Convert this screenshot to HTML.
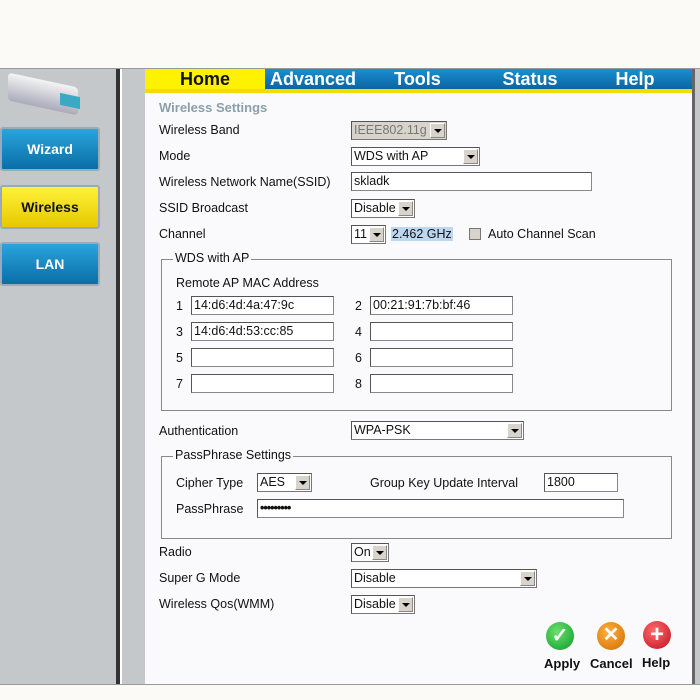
<!DOCTYPE html>
<html><head><style>
*{margin:0;padding:0;box-sizing:border-box}
body{width:700px;height:700px;background:#fbfaf6;position:relative;overflow:hidden;font-family:"Liberation Sans",Arial,sans-serif;font-size:12.5px;color:#111}
.a{position:absolute}
.sel{position:absolute;background:#fff;border:1px solid #777;border-top-color:#555;border-left-color:#555;height:19px;font-size:12.5px;padding:1px 2px;line-height:15px}
.sel .ar{position:absolute;right:1px;top:1px;width:15px;height:15px;background:#d8d4cc;border:1px solid #888;border-top-color:#fff;border-left-color:#fff}
.sel .ar:after{content:"";position:absolute;left:3px;top:5px;border-left:4px solid transparent;border-right:4px solid transparent;border-top:4px solid #000}
.inp{position:absolute;background:#fff;border:1px solid #888;border-top-color:#555;border-left-color:#555;height:19px;font-size:12.5px;padding:1px 2px;line-height:15px}
.tab{position:absolute;top:69px;height:21px;color:#fff;font-weight:bold;font-size:18px;line-height:20px;text-align:center}
.btn{position:absolute;left:0;width:100px;height:44px;border-radius:3px;font-weight:bold;font-size:14px;text-align:center;line-height:40px}
.fs{position:absolute;border:1px solid #888}
.lg{position:absolute;background:#fafafc;padding:0 2px;top:-9px}
</style></head><body>
<div class="a" style="left:0;top:68px;width:700px;height:617px;background:#c4c8ca;border-top:1px solid #999;border-bottom:1px solid #999"></div>
<div class="a" style="left:116px;top:69px;width:4px;height:615px;background:#333"></div>
<div class="a" style="left:120px;top:69px;width:2px;height:615px;background:#fff"></div>
<div class="a" style="left:145px;top:69px;width:547px;height:615px;background:#fafafc"></div>
<div class="a" style="left:692px;top:69px;width:3px;height:615px;background:#666"></div>
<!-- router -->
<div class="a" style="left:8px;top:80px;width:70px;height:28px;background:linear-gradient(#f4f4f4,#aab);transform:skewY(12deg);border-radius:4px"></div>
<div class="a" style="left:60px;top:95px;width:20px;height:12px;background:#3aa9c4;transform:skewY(12deg)"></div>
<!-- nav buttons -->
<div class="btn" style="top:127px;background:linear-gradient(#2ba4dc,#0a6ea6);color:#fff;border:2px solid #9ab">Wizard</div>
<div class="btn" style="top:185px;background:linear-gradient(#fff23a,#e6c800);color:#111;border:2px solid #9ab">Wireless</div>
<div class="btn" style="top:242px;background:linear-gradient(#2ba4dc,#0a6ea6);color:#fff;border:2px solid #9ab">LAN</div>
<!-- tabs -->
<div class="a" style="left:145px;top:69px;width:547px;height:21px;background:linear-gradient(#1a8fd0,#0a62a0)"></div>
<div class="tab" style="left:145px;width:120px;background:#fff200;color:#111">Home</div>
<div class="tab" style="left:268px;width:90px">Advanced</div>
<div class="tab" style="left:380px;width:75px">Tools</div>
<div class="tab" style="left:490px;width:80px">Status</div>
<div class="tab" style="left:600px;width:70px">Help</div>
<div class="a" style="left:145px;top:89px;width:547px;height:4px;background:#f2dd00"></div>
<div class="a" style="left:159px;top:100px;color:#8aa0aa;font-weight:bold;font-size:13px">Wireless Settings</div>
<div class="a" style="left:159px;top:123px">Wireless Band</div>
<div class="a" style="left:159px;top:149px">Mode</div>
<div class="a" style="left:159px;top:175px">Wireless Network Name(SSID)</div>
<div class="a" style="left:159px;top:201px">SSID Broadcast</div>
<div class="a" style="left:159px;top:227px">Channel</div>
<div class="sel" style="left:351px;top:121px;width:96px;background:#d8d4cc;color:#777">IEEE802.11g<span class="ar"></span></div>
<div class="sel" style="left:351px;top:147px;width:129px">WDS with AP<span class="ar"></span></div>
<div class="inp" style="left:351px;top:172px;width:241px">skladk</div>
<div class="sel" style="left:351px;top:199px;width:64px">Disable<span class="ar"></span></div>
<div class="sel" style="left:351px;top:225px;width:35px">11<span class="ar"></span></div>
<div class="a" style="left:391px;top:227px;background:#bcd8f0;padding:0 1px">2.462 GHz</div>
<div class="a" style="left:469px;top:228px;width:12px;height:12px;background:#d8d4cc;border:1px solid #777"></div>
<div class="a" style="left:488px;top:227px">Auto Channel Scan</div>
<div class="fs" style="left:161px;top:259px;width:511px;height:152px"><span class="lg" style="left:11px">WDS with AP</span></div>
<div class="a" style="left:176px;top:276px">Remote AP MAC Address</div>
<div class="a" style="left:176px;top:299px">1</div><div class="inp" style="left:191px;top:296px;width:143px">14:d6:4d:4a:47:9c</div>
<div class="a" style="left:355px;top:299px">2</div><div class="inp" style="left:370px;top:296px;width:143px">00:21:91:7b:bf:46</div>
<div class="a" style="left:176px;top:325px">3</div><div class="inp" style="left:191px;top:322px;width:143px">14:d6:4d:53:cc:85</div>
<div class="a" style="left:355px;top:325px">4</div><div class="inp" style="left:370px;top:322px;width:143px"></div>
<div class="a" style="left:176px;top:351px">5</div><div class="inp" style="left:191px;top:348px;width:143px"></div>
<div class="a" style="left:355px;top:351px">6</div><div class="inp" style="left:370px;top:348px;width:143px"></div>
<div class="a" style="left:176px;top:377px">7</div><div class="inp" style="left:191px;top:374px;width:143px"></div>
<div class="a" style="left:355px;top:377px">8</div><div class="inp" style="left:370px;top:374px;width:143px"></div>
<div class="a" style="left:159px;top:424px">Authentication</div>
<div class="sel" style="left:351px;top:421px;width:173px">WPA-PSK<span class="ar"></span></div>
<div class="fs" style="left:161px;top:456px;width:511px;height:83px"><span class="lg" style="left:11px">PassPhrase Settings</span></div>
<div class="a" style="left:176px;top:476px">Cipher Type</div>
<div class="sel" style="left:257px;top:473px;width:55px">AES<span class="ar"></span></div>
<div class="a" style="left:370px;top:476px">Group Key Update Interval</div>
<div class="inp" style="left:544px;top:473px;width:74px">1800</div>
<div class="a" style="left:176px;top:502px">PassPhrase</div>
<div class="inp" style="left:257px;top:499px;width:367px;font-weight:bold;letter-spacing:-1px">•••••••••</div>
<div class="a" style="left:159px;top:545px">Radio</div>
<div class="sel" style="left:351px;top:543px;width:38px">On<span class="ar"></span></div>
<div class="a" style="left:159px;top:571px">Super G Mode</div>
<div class="sel" style="left:351px;top:569px;width:186px">Disable<span class="ar"></span></div>
<div class="a" style="left:159px;top:597px">Wireless Qos(WMM)</div>
<div class="sel" style="left:351px;top:595px;width:64px">Disable<span class="ar"></span></div>
<!-- action icons -->
<div class="a" style="left:546px;top:622px;width:28px;height:28px;border-radius:50%;background:radial-gradient(circle at 40% 35%,#6de06d,#0a9a2a);color:#fff;font-weight:bold;font-size:20px;text-align:center;line-height:28px">✓</div>
<div class="a" style="left:597px;top:622px;width:28px;height:28px;border-radius:50%;background:radial-gradient(circle at 40% 35%,#ffb040,#d06a00);color:#fff;font-weight:bold;font-size:20px;text-align:center;line-height:27px">✕</div>
<div class="a" style="left:643px;top:621px;width:28px;height:28px;border-radius:50%;background:radial-gradient(circle at 40% 35%,#ff6a6a,#c01020);color:#fff;font-weight:bold;font-size:24px;text-align:center;line-height:27px">+</div>
<div class="a" style="left:544px;top:656px;font-weight:bold;font-size:13px">Apply</div>
<div class="a" style="left:590px;top:656px;font-weight:bold;font-size:13px">Cancel</div>
<div class="a" style="left:642px;top:655px;font-weight:bold;font-size:13px">Help</div>
</body></html>
